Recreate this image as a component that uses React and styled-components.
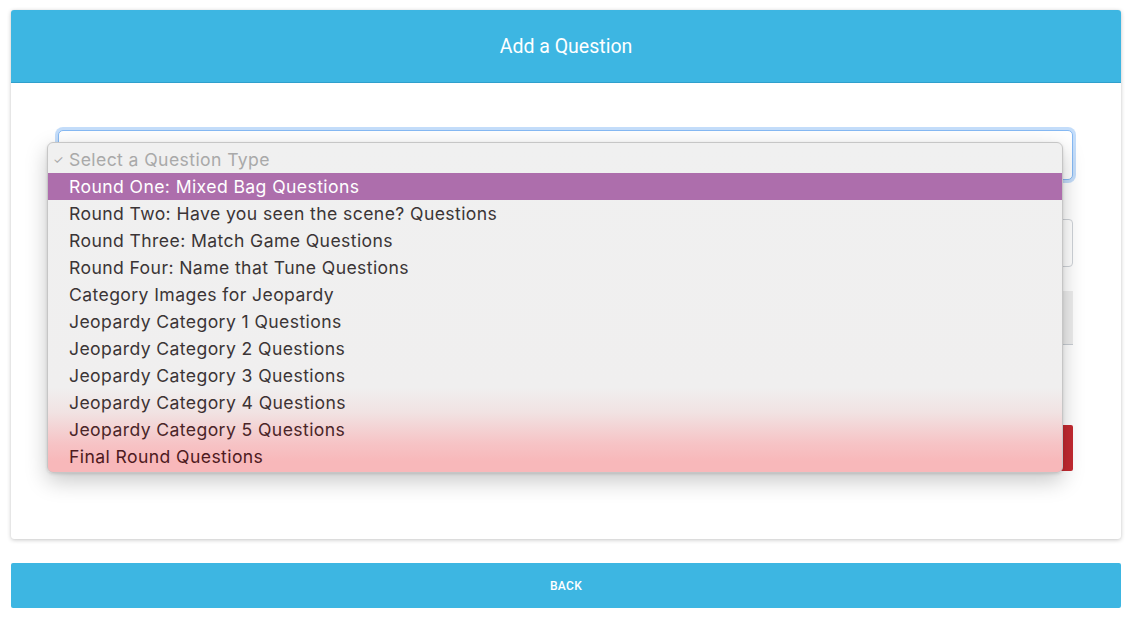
import React from "react";
import styled, { createGlobalStyle } from "styled-components";

const Global = createGlobalStyle`
  html, body { margin: 0; padding: 0; background: #ffffff; }
  body { font-family: Roboto, "Liberation Sans", sans-serif; }
  * { box-sizing: border-box; }
`;

const Page = styled.div`
  padding: 10px 9px 10px 11px;
  display: flex;
  flex-direction: column;
  gap: 24px;
`;

const Card = styled.div`
  position: relative;
  background: #fff;
  border-radius: 3px;
  box-shadow: 0 1px 4px rgba(0, 0, 0, 0.22), 0 0 1px rgba(0, 0, 0, 0.1);
`;

const Header = styled.div`
  height: 73px;
  background: #3db6e2;
  border-bottom: 1px solid #2f9fcc;
  border-radius: 3px 3px 0 0;
  display: flex;
  align-items: center;
  justify-content: center;
  color: #fff;
  font-size: 19.5px;
  font-family: Roboto, sans-serif;
`;

const Body = styled.div`
  padding: 47px 48px 68px 47px;
  display: flex;
  flex-direction: column;
`;

const SelectBox = styled.div`
  height: 50px;
  border: 1px solid #86b9f3;
  border-radius: 5px;
  box-shadow: 0 0 0 3px rgba(125, 180, 245, 0.45);
  background: #fff;
`;

const TextInput = styled.div`
  margin-top: 39px;
  height: 48px;
  border: 1px solid #cfd3d8;
  border-radius: 4px;
`;

const GreyField = styled.div`
  margin-top: 24px;
  height: 54px;
  background: #ededed;
  border-bottom: 1px solid #c8cdd3;
`;

const RedButton = styled.div`
  margin-top: 80px;
  height: 46px;
  background: #c42a31;
  border-radius: 2px;
`;

const Menu = styled.div`
  position: absolute;
  left: 36px;
  top: 132px;
  width: 1016px;
  height: 331px;
  border: 1px solid #c6c6c6;
  border-radius: 6px;
  background: linear-gradient(
    to bottom,
    #f0f0f0 0px,
    #f0efef 245px,
    #f1e2e2 270px,
    #f6c4c6 300px,
    #f8b8ba 318px,
    #f8b8ba 331px
  );
  box-shadow: 0 8px 22px rgba(0, 0, 0, 0.22), 0 1px 3px rgba(0, 0, 0, 0.12);
  padding-top: 3px;
  display: flex;
  flex-direction: column;
  overflow: hidden;
`;

const Option = styled.div`
  position: relative;
  height: 27px;
  line-height: 27px;
  padding-left: 21px;
  font-family: Inter, "Noto Sans", sans-serif;
  font-size: 17.6px;
  letter-spacing: 0.4px;
  color: ${(p) => (p.$placeholder ? "#a9a9a9" : p.$active ? "#ffffff" : p.$tint || "#3b3536")};
  background: ${(p) => (p.$active ? "#ad6eac" : "transparent")};
`;

const Check = styled.span`
  position: absolute;
  left: 5px;
  top: 0;
  font-size: 12px;
  letter-spacing: 0;
  color: #a9a9a9;
`;

const BackButton = styled.div`
  height: 45px;
  background: #3db6e2;
  border-radius: 2px;
  color: #fff;
  font-family: Roboto, sans-serif;
  font-weight: 500;
  font-size: 12px;
  letter-spacing: 0.3px;
  display: flex;
  align-items: center;
  justify-content: center;
`;

const options = [
  "Round One: Mixed Bag Questions",
  "Round Two: Have you seen the scene? Questions",
  "Round Three: Match Game Questions",
  "Round Four: Name that Tune Questions",
  "Category Images for Jeopardy",
  "Jeopardy Category 1 Questions",
  "Jeopardy Category 2 Questions",
  "Jeopardy Category 3 Questions",
  "Jeopardy Category 4 Questions",
  "Jeopardy Category 5 Questions",
  "Final Round Questions",
];

const tints = { 8: "#3d3233", 9: "#4a2528", 10: "#4e1a1e" };

export default function App() {
  return (
    <>
      <Global />
      <Page>
        <Card>
          <Header>Add a Question</Header>
          <Body>
            <SelectBox />
            <TextInput />
            <GreyField />
            <RedButton />
          </Body>
          <Menu>
            <Option $placeholder>
              <Check>✓</Check>
              Select a Question Type
            </Option>
            {options.map((o, i) => (
              <Option key={o} $active={i === 0} $tint={tints[i]}>
                {o}
              </Option>
            ))}
          </Menu>
        </Card>
        <BackButton>BACK</BackButton>
      </Page>
    </>
  );
}
